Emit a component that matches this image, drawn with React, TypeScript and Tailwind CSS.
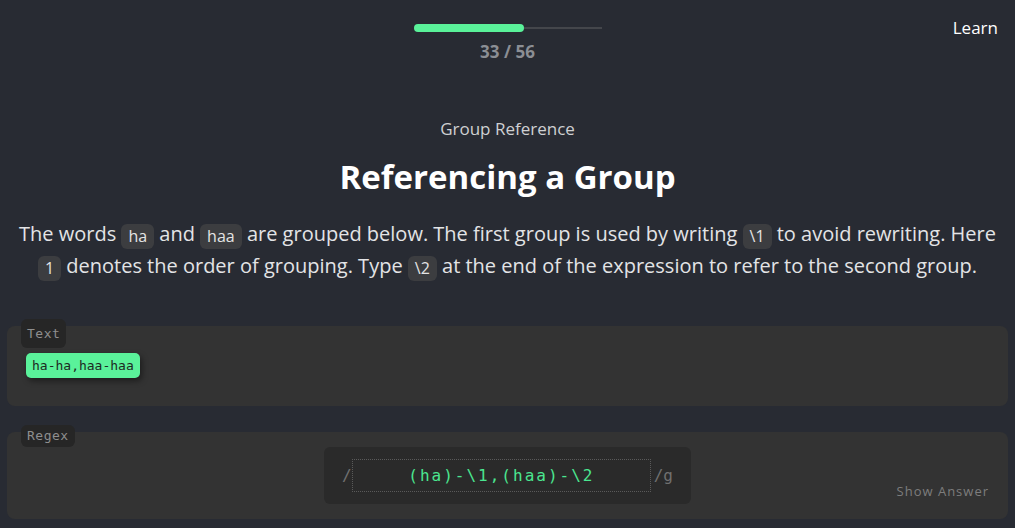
import React from "react";

const sans = { fontFamily: '"Open Sans", "Noto Sans", sans-serif' };
const mono = { fontFamily: '"DejaVu Sans Mono", "Liberation Mono", monospace' };

function Code({ children }: { children: React.ReactNode }) {
    return (
        <code className="inline-block rounded-md bg-[#3c3d40] px-[7px] text-[16px] leading-[25px] text-[#e4e4e4] align-[-1px]" style={sans}>
            {children}
        </code>
    );
}

function Panel({ label, labelClass, children }: { label: string; labelClass: string; children: React.ReactNode }) {
    return (
        <div className="relative rounded-lg bg-[#333333]">
            <span className={"absolute left-[14px] rounded-md bg-[#262626] px-[6px] text-[13px] tracking-[0.5px] text-[#8e8e8e] " + labelClass} style={mono}>
                {label}
            </span>
            {children}
        </div>
    );
}

export default function App() {
    const done = 33;
    const total = 56;
    return (
        <div className="min-h-[528px] w-full bg-[#282b33] text-white" style={sans}>
            <header className="relative flex flex-col items-center pt-6">
                <div className="relative flex h-2 w-[188px] items-center">
                    <div className="h-[2px] w-full bg-[#44464b]" />
                    <div className="absolute left-0 top-0 h-2 rounded-full bg-[#5af29a]" style={{ width: `${(done / total) * 100}%` }} />
                </div>
                <div className="mt-2 text-[17px] font-bold leading-6 text-[#8b8e94]">
                    {done} / {total}
                </div>
                <a className="absolute right-[17px] top-4 text-[17px] leading-6 text-white">Learn</a>
            </header>

            <section className="mt-[53px] flex flex-col items-center px-4 text-center">
                <div className="text-[17px] leading-6 text-[#cfd0d2]">Group Reference</div>
                <h1 className="mt-4 text-[33px] font-bold leading-10">Referencing a Group</h1>
                <p className="mt-[21px] max-w-[990px] text-[20px] leading-8 text-[#e3e4e6]">
                    The words <Code>ha</Code> and <Code>haa</Code> are grouped below. The first group is used by writing <Code>\1</Code> to
                    avoid rewriting. Here <Code>1</Code> denotes the order of grouping. Type <Code>\2</Code> at the end of the expression to
                    refer to the second group.
                </p>
            </section>

            <div className="mt-11 flex flex-col gap-[26px] px-[7px] pb-2">
                <Panel label="Text" labelClass="-top-[7px] py-[5px] leading-[19px]">
                    <div className="h-20 px-[19px] pt-[26px]">
                        <span className="inline-block rounded-[5px] bg-[#5af29a] px-[6px] text-[13px] leading-[25px] text-[#1d2a22] shadow-[2px_3px_6px_rgba(0,0,0,0.45)]" style={mono}>
                            ha-ha,haa-haa
                        </span>
                    </div>
                </Panel>

                <Panel label="Regex" labelClass="-top-[7px] py-[1px] leading-[20px]">
                    <div className="relative flex h-[87px] justify-center pt-[15px]">
                        <div className="flex h-[57px] w-[367px] items-center rounded-md bg-[#2a2a2a] pl-[18px] pr-[18px]" style={mono}>
                            <span className="w-[10px] text-base text-[#707070]">/</span>
                            <div className="flex h-[33px] flex-1 items-center justify-center border border-dotted border-[#5a5a5a] text-base tracking-[2px] text-[#4ae690]">
                                (ha)-\1,(haa)-\2
                            </div>
                            <span className="ml-[3px] text-base text-[#707070]">/g</span>
                        </div>
                        <button className="absolute bottom-[18px] right-[19px] text-[13px] tracking-[1px] text-[#7d7d7d]" style={sans}>
                            Show Answer
                        </button>
                    </div>
                </Panel>
            </div>
        </div>
    );
}
